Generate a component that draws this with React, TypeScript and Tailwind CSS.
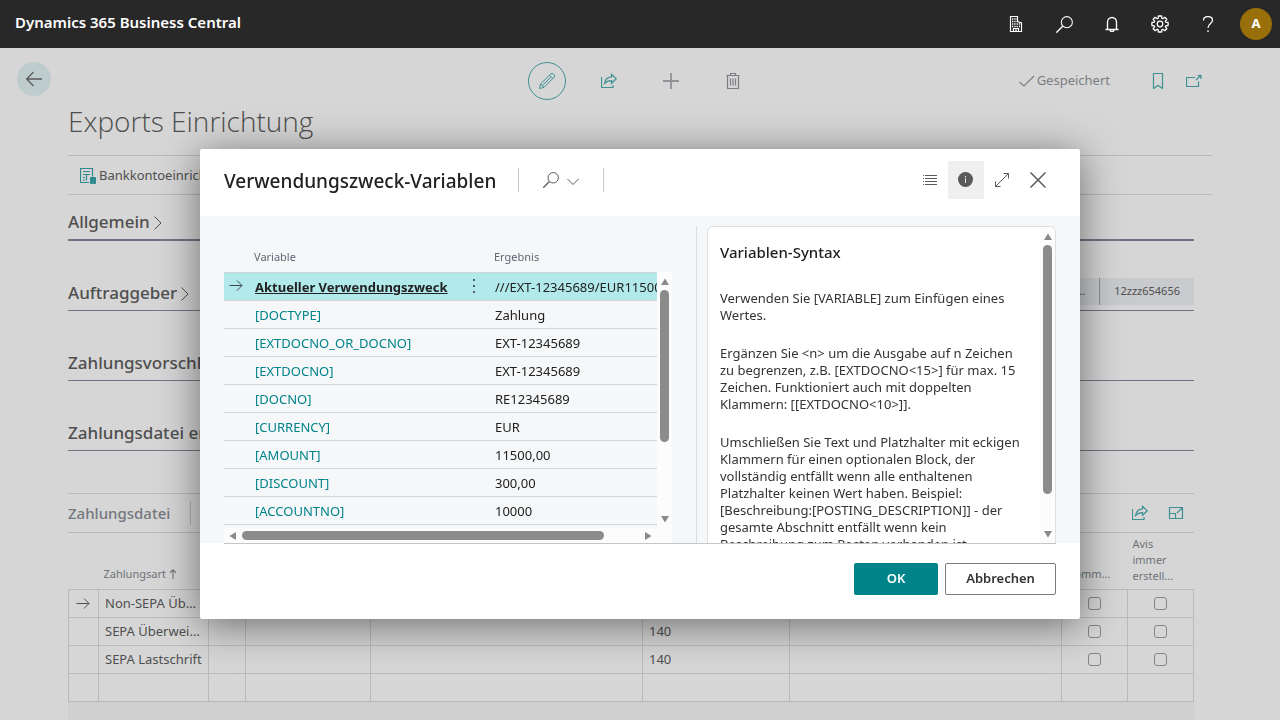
import React, { useState } from "react";
import clsx from "clsx";

type Variable = { name: string; result: string };

const variables: Variable[] = [
  { name: "Aktueller Verwendungszweck", result: "///EXT-12345689/EUR11500,00" },
  { name: "[DOCTYPE]", result: "Zahlung" },
  { name: "[EXTDOCNO_OR_DOCNO]", result: "EXT-12345689" },
  { name: "[EXTDOCNO]", result: "EXT-12345689" },
  { name: "[DOCNO]", result: "RE12345689" },
  { name: "[CURRENCY]", result: "EUR" },
  { name: "[AMOUNT]", result: "11500,00" },
  { name: "[DISCOUNT]", result: "300,00" },
  { name: "[ACCOUNTNO]", result: "10000" },
];

const payments = [
  { type: "Non-SEPA Überweisung", code: "" },
  { type: "SEPA Überweisung", code: "140" },
  { type: "SEPA Lastschrift", code: "140" },
];

type IconProps = { className?: string; children: React.ReactNode; box?: number };

function Icon({ className, children, box = 16 }: IconProps) {
  return (
    <svg
      viewBox={`0 0 ${box} ${box}`}
      className={clsx("shrink-0", className)}
      fill="none"
      stroke="currentColor"
      strokeWidth="1"
      aria-hidden="true"
    >
      {children}
    </svg>
  );
}

const SearchIcon = ({ className }: { className?: string }) => (
  <Icon className={className}>
    <circle cx="10.2" cy="5.8" r="5.2" />
    <path d="M6.500 9.500 0.300 15.700" strokeWidth="1.300" />
  </Icon>
);

const ShareIcon = () => (
  <Icon className="size-4">
    <path d="M0.500 4v10.500h11.500v-2.500" strokeWidth="1.200" />
    <path d="M10.500 1.300v2.600C6 4.300 4 7 3.500 10.500c1.900-2.100 3.900-2.900 7-2.900v2.700l4.800-4.500z" strokeWidth="1.200" />
  </Icon>
);

const ArrowRight = ({ className }: { className?: string }) => (
  <Icon className={className}>
    <path d="M1.500 7.500h12.500M9 2.500l5 5-5 5" />
  </Icon>
);

function Triangle({ dir }: { dir: "up" | "down" | "left" | "right" }) {
  const d = {
    up: "M4 0.500 8 7H0z",
    down: "M0 1h8L4 7.500z",
    left: "M7 0v8L0.500 4z",
    right: "M1 0 7.500 4 1 8z",
  }[dir];
  return (
    <svg viewBox="0 0 8 8" className="size-2 shrink-0 text-[#8a8a8a]" fill="currentColor" aria-hidden="true">
      <path d={d} />
    </svg>
  );
}

function VScroll({ thumb }: { thumb: string }) {
  return (
    <div className="flex w-[15px] shrink-0 flex-col items-center gap-1 bg-[#fcfcfc] pt-1.5 pb-[5px]">
      <Triangle dir="up" />
      <div className="flex-1">
        <div className={clsx("w-[9px] rounded-full bg-[#8b8b8b]", thumb)} />
      </div>
      <Triangle dir="down" />
    </div>
  );
}

function Section({ title, first, children }: { title: string; first?: boolean; children?: React.ReactNode }) {
  return (
    <section
      className={clsx(
        "flex items-center justify-between border-[#6f7482]",
        first ? "h-[46px] border-b-2" : "h-[70px] border-b pt-[34px]"
      )}
    >
      <h2 className={clsx("text-[17px] font-medium", first && "pt-2.5")}>
        <button className="flex items-center gap-[3px] whitespace-nowrap">
          {title}
          <svg
            viewBox="0 0 10 16"
            className="mt-0.5 h-4 w-2.5"
            fill="none"
            stroke="currentColor"
            aria-hidden="true"
          >
            <path d="M1.500 1.500 8 8l-6.500 6.500" />
          </svg>
        </button>
      </h2>
      {children}
    </section>
  );
}

function TopBar() {
  return (
    <header className="flex h-12 items-center justify-between bg-[#282828] pr-2 pl-[15px] text-white">
      <h1 className="pb-1 text-[15px] font-semibold">Dynamics 365 Business Central</h1>
      <div className="flex items-center">
        <button className="grid w-12 place-items-center" aria-label="Umgebung">
          <Icon className="size-4">
            <path d="M2.500 15.500V0.500h7v5l4 1.500v8.500zM5.500 15.500v-3h5v3M8 12.500v3" strokeWidth="1.200" />
            <path d="M4 3h5M4 5.500h5M4 8h8M4 10.500h8" strokeWidth="1.300" strokeDasharray="1.300 1" />
          </Icon>
        </button>
        <button className="grid w-12 place-items-center" aria-label="Suchen">
          <SearchIcon className="size-[17px]" />
        </button>
        <button className="grid w-12 place-items-center" aria-label="Benachrichtigungen">
          <Icon className="size-4">
            <path
              d="M1.500 13.500h13M3.500 13.500V6a4.500 4.500 0 0 1 9 0v7.500M6 14a2 1.500 0 0 0 4 0"
              strokeWidth="1.300"
            />
          </Icon>
        </button>
        <button className="grid w-12 place-items-center" aria-label="Einstellungen">
          <Icon className="size-[18px]" box={18}>
            <circle cx="9" cy="9" r="2.800" strokeWidth="1.300" />
            <path
              strokeLinejoin="round"
              strokeWidth="1.300"
              d="M7.400 1h3.200l.3 2.300 1 .4 1.900-1.400 2 2-1.400 1.900.4 1 2.300.3v3l-2.300.3-.4 1 1.400 1.900-2 2-1.900-1.400-1 .4-.3 2.300H7.400l-.3-2.300-1-.4-1.900 1.400-2-2 1.400-1.900-.4-1-2.300-.3v-3l2.300-.3.4-1-1.400-1.900 2-2 1.900 1.400 1-.4z"
            />
          </Icon>
        </button>
        <button className="grid w-12 place-items-center" aria-label="Hilfe">
          <Icon className="size-4">
            <path
              d="M3.500 4.500C3.500 2 5.500 0.600 8 0.600S12.500 2 12.500 4.300C12.500 7.500 8 7.500 8 12M8 14.300v1.700"
              strokeWidth="1.300"
            />
          </Icon>
        </button>
        <button className="ml-2 grid size-8 place-items-center rounded-full bg-[#986f0b] text-[13px] font-bold">
          A
        </button>
      </div>
    </header>
  );
}

function PageToolbar() {
  return (
    <div className="flex h-[38px] items-start">
      <div className="w-[68px] shrink-0 pl-[17px]">
        <button className="grid size-[34px] place-items-center rounded-full bg-[#bfcccd] text-[#5a5a5a]" aria-label="Zurück">
          <Icon className="size-4">
            <path d="M16 8H1M7.500 1 0.700 8l6.800 7" strokeWidth="1.300" />
          </Icon>
        </button>
      </div>
      <div className="grid flex-1 grid-cols-[1fr_auto_1fr] items-center pr-[68px] text-[#3f9093]">
        <span />
        <div className="flex gap-6">
          <button className="grid size-[38px] place-items-center rounded-full border border-[#3f9093]" aria-label="Bearbeiten">
            <Icon className="size-4">
              <path d="M0.500 15.500 1.600 11 11.800 0.900a1.700 1.700 0 0 1 2.400 0l.9.900a1.700 1.700 0 0 1 0 2.400L5 14.400zM1.600 11 5 14.400M10.500 2.200l3.300 3.300M3.200 12.800l8.500-8.500" />
            </Icon>
          </button>
          <button className="grid size-[38px] place-items-center" aria-label="Teilen">
            <ShareIcon />
          </button>
          <button className="grid size-[38px] place-items-center text-[#8f9297]" aria-label="Neu">
            <Icon className="size-4">
              <path d="M0 8h16M8 0v16" strokeWidth="1.800" />
            </Icon>
          </button>
          <button className="grid size-[38px] place-items-center text-[#7b7e84]" aria-label="Löschen">
            <Icon className="size-4">
              <path
                d="M1.500 2.500h13M5.500 2.500v-2h5v2M2.500 2.500v13h11v-13M5.500 5.500v7M8 5.500v7M10.500 5.500v7"
                strokeWidth="1.200"
              />
            </Icon>
          </button>
        </div>
        <div className="flex items-center justify-end pr-2.5">
          <span className="flex items-center gap-0.5 text-[13px] text-[#7a7d83]">
            <Icon className="size-4">
              <path d="M0.500 9 5 13 15 3" strokeWidth="1.200" />
            </Icon>
            Gespeichert
          </span>
          <button className="ml-10 grid place-items-center" aria-label="Lesezeichen">
            <Icon className="size-4">
              <path d="M3.500 0.500h9v15L8 12.500l-4.500 3z" strokeWidth="1.200" />
            </Icon>
          </button>
          <button className="ml-5 grid place-items-center" aria-label="In neuem Fenster öffnen">
            <Icon className="size-4">
              <path d="M9 4.500H0.500v9h12V8.500M10 7l5-5M11.500 2.500h3.500V6" strokeWidth="1.200" />
            </Icon>
          </button>
        </div>
      </div>
    </div>
  );
}

const cell = "h-7 border border-[#b9babc] px-1.5 pt-px";

function PaymentTable() {
  return (
    <table className="w-full table-fixed border-collapse text-left text-[13px] text-[#4f4f4f]">
      <colgroup>
        <col className="w-[30px]" />
        <col className="w-[110px]" />
        <col className="w-[37px]" />
        <col className="w-[125px]" />
        <col />
        <col className="w-[147px]" />
        <col />
        <col className="w-[66px]" />
        <col className="w-[66px]" />
      </colgroup>
      <thead>
        <tr className="h-14 align-bottom text-[11px] leading-4 text-[#6f7278]">
          <td />
          <th className="px-[5px] pb-[7px] font-normal whitespace-nowrap">
            <span className="flex items-center gap-0.5">
              Zahlungsart
              <Icon className="size-2.5" box={12}>
                <path d="M6 12V1M2.500 4.500 6 1l3.500 3.500" strokeWidth="1.300" />
              </Icon>
            </span>
          </th>
          <td colSpan={5} />
          <th className="px-1.5 pb-[7px] font-normal">Komm...</th>
          <th className="px-[5px] pb-[5px] font-normal">Avis immer erstell...</th>
        </tr>
      </thead>
      <tbody>
        {payments.map((p, i) => (
          <tr key={p.type}>
            <td className={cell}>{i === 0 && <ArrowRight className="size-4" />}</td>
            <td className={clsx(cell, "truncate")}>{p.type}</td>
            <td className={cell} />
            <td className={cell} />
            <td className={cell} />
            <td className={cell}>{p.code}</td>
            <td className={cell} />
            {["Kommentar", "Avis immer erstellen"].map((label) => (
              <td key={label} className={cell}>
                <input
                  type="checkbox"
                  aria-label={`${label} ${p.type}`}
                  className="mx-auto block size-[13px] appearance-none rounded-[3px] border border-[#858585]"
                />
              </td>
            ))}
          </tr>
        ))}
        <tr>
          {Array.from({ length: 9 }, (_, i) => (
            <td key={i} className={cell} />
          ))}
        </tr>
      </tbody>
    </table>
  );
}

function VariableList() {
  const [active, setActive] = useState(0);

  return (
    <div className="flex w-[448px] shrink-0 flex-col">
      <div className="flex flex-1 items-end overflow-hidden">
        <div className="min-w-0 flex-1 self-start overflow-hidden">
          <table className="w-full table-fixed border-collapse text-left text-[13px]">
            <colgroup>
              <col className="w-[25px]" />
              <col className="w-[210px]" />
              <col className="w-[29px]" />
              <col />
            </colgroup>
            <thead>
              <tr className="h-14 align-bottom text-[11px] leading-4 text-[#5f6673]">
                <td />
                <th className="px-[5px] pb-[7px] font-normal">Variable</th>
                <td />
                <th className="px-1.5 pb-[7px] font-normal">Ergebnis</th>
              </tr>
            </thead>
            <tbody className="text-[#212121]">
              {variables.map((v, i) => (
                <tr
                  key={v.name}
                  onClick={() => setActive(i)}
                  className={clsx("h-7 border-y border-[#d2d4dc]", i === active && "bg-[#b2eaec]")}
                >
                  <td className="pl-1">{i === active && <ArrowRight className="size-4 text-[#3f4650]" />}</td>
                  <td className="px-1.5 pt-[3px] whitespace-nowrap">
                    <a href="#" className={i === 0 ? "font-bold underline" : "text-[#00848a]"}>
                      {v.name}
                    </a>
                  </td>
                  <td>
                    {i === active && (
                      <button className="mx-auto block" aria-label="Weitere Optionen">
                        <svg viewBox="0 0 2 14" className="h-3.5 w-0.5" fill="#505c6d" aria-hidden="true">
                          <path d="M0 0h2v2H0zM0 6h2v2H0zM0 12h2v2H0z" />
                        </svg>
                      </button>
                    )}
                  </td>
                  <td className="overflow-hidden px-[7px] pt-[3px] whitespace-nowrap">{v.result}</td>
                </tr>
              ))}
            </tbody>
          </table>
        </div>
        <div className="flex h-full pt-14">
          <VScroll thumb="h-[152px]" />
        </div>
      </div>
      <div className="flex h-[15px] items-center gap-[5px] bg-[#fcfcfc] pr-5 pl-[5px]">
        <Triangle dir="left" />
        <div className="flex-1">
          <div className="h-[9px] w-[362px] rounded-full bg-[#8b8b8b]" />
        </div>
        <Triangle dir="right" />
      </div>
    </div>
  );
}

function SyntaxPanel() {
  return (
    <aside className="flex min-w-0 flex-1 overflow-hidden rounded-t-md border border-b-0 border-[#dcdfe3] bg-white">
      <div className="flex-1 overflow-hidden pt-[15px] pl-3 text-[13px] leading-[17px] text-[#333]">
        <h3 className="text-[15px] leading-5 font-medium text-[#212121]">Variablen-Syntax</h3>
        <p className="mt-7">
          Verwenden Sie [VARIABLE] zum Einfügen eines
          <br />
          Wertes.
        </p>
        <p className="mt-[21px] whitespace-nowrap">
          Ergänzen Sie &lt;n&gt; um die Ausgabe auf n Zeichen
          <br />
          zu begrenzen, z.B. [EXTDOCNO&lt;15&gt;] für max. 15
          <br />
          Zeichen. Funktioniert auch mit doppelten
          <br />
          Klammern: [[EXTDOCNO&lt;10&gt;]].
        </p>
        <p className="mt-[21px] whitespace-nowrap">
          Umschließen Sie Text und Platzhalter mit eckigen
          <br />
          Klammern für einen optionalen Block, der
          <br />
          vollständig entfällt wenn alle enthaltenen
          <br />
          Platzhalter keinen Wert haben. Beispiel:
          <br />
          [Beschreibung:[POSTING_DESCRIPTION]] - der
          <br />
          gesamte Abschnitt entfällt wenn kein
          <br />
          Beschreibung zum Posten vorhanden ist.
        </p>
      </div>
      <VScroll thumb="h-[249px]" />
    </aside>
  );
}

function VariablesDialog() {
  return (
    <div
      role="dialog"
      aria-labelledby="dialog-title"
      className="w-[880px] max-w-full overflow-hidden rounded-[2px] bg-white shadow-[0_6px_40px_0_rgba(0,0,0,0.5)]"
    >
      <div className="flex h-[67px] items-center px-6 pb-[5px] text-[#5a5a5a]">
        <h2 id="dialog-title" className="pt-0.5 text-[19px] font-medium text-[#212121]">
          Verwendungszweck-Variablen
        </h2>
        <div className="ml-[22px] flex h-6 items-center gap-2 border-x border-[#c9c9c9] px-6">
          <button aria-label="Suchen">
            <SearchIcon className="size-4" />
          </button>
          <button aria-label="Suchoptionen">
            <Icon className="mt-1 size-3" box={12}>
              <path d="M0.500 3 6 8.500 11.500 3" />
            </Icon>
          </button>
        </div>
        <div className="ml-auto flex">
          <button className="grid h-[38px] w-9 place-items-center" aria-label="Liste">
            <Icon className="size-4">
              <path d="M1 3.500h1M3 3.500h12M1 6.500h1M3 6.500h12M1 9.500h1M3 9.500h12M1 12.500h1M3 12.500h12" />
            </Icon>
          </button>
          <button className="grid h-[38px] w-9 place-items-center rounded-[2px] bg-[#efefef]" aria-label="Info">
            <svg viewBox="0 0 16 16" className="size-4" aria-hidden="true">
              <circle cx="7.500" cy="7.500" r="7.500" fill="#5a5a5a" />
              <path d="M7.500 4v1.500M7.500 6.500v4.500" stroke="#efefef" strokeWidth="1" />
            </svg>
          </button>
          <button className="grid h-[38px] w-9 place-items-center" aria-label="Maximieren">
            <Icon className="size-4">
              <path d="M1.500 14.500l13-13M9.500 1.500h5v5M1.500 9.500v5h5" />
            </Icon>
          </button>
          <button className="grid h-[38px] w-9 place-items-center" aria-label="Schließen">
            <Icon className="size-4">
              <path d="M0.500 0.500l15 15M15.500 0.500l-15 15" strokeWidth="1.500" />
            </Icon>
          </button>
        </div>
      </div>
      <div className="flex h-[327px] bg-[#f5f7f9] px-6">
        <VariableList />
        <div className="mt-[10px] ml-6 flex min-w-0 flex-1 gap-2.5">
          <div className="w-px bg-[#d9dce0]" />
          <SyntaxPanel />
        </div>
      </div>
      <div className="mx-6 flex h-[76px] items-start justify-end gap-[7px] border-t border-[#c6c6c6] pt-[19px] text-[13px] font-semibold">
        <button className="h-8 w-[84px] rounded-[2px] bg-[#00848a] text-white">OK</button>
        <button className="h-8 w-[111px] rounded-[2px] border border-[#7c7c7c] text-[#333]">Abbrechen</button>
      </div>
    </div>
  );
}

export default function App() {
  return (
    <div className="h-screen overflow-hidden bg-[#d6d6d6] font-['Noto_Sans',sans-serif] text-[#4f4f4f]">
      <TopBar />
      <main className="pt-[14px]">
        <PageToolbar />
        <div className="px-[68px]">
          <h1 className="pb-3 font-['Open_Sans',sans-serif] text-[28px] leading-[43px] font-light">
            Exports Einrichtung
          </h1>
          <div className="flex h-10 items-center border-y border-[#b9b9b9] px-3">
            <button className="flex items-center gap-[3px] pt-0.5 text-[13px]">
              <Icon className="size-4 text-[#2c8a8e]">
                <path d="M9 14.500H0.500v-14h12v8M3 3.500h7M3 6.500h7M3 9.500h2M3 12h2M6.500 6.500v6" strokeWidth="1.200" />
                <path d="M10.500 9.500h5v6h-2v-2h-1v2h-2z" fill="currentColor" />
              </Icon>
              Bankkontoeinrichtung
            </button>
          </div>
          <div className="mr-[18px]">
            <Section title="Allgemein" first />
            <Section title="Auftraggeber">
              <div className="mb-0.5 flex h-[27px] items-center bg-[#c8cacd] text-[11px]">
                <span className="w-20 pr-3.5 text-right">A...</span>
                <span className="flex h-full items-center border-l border-[#8f9092] px-3.5">12zzz654656</span>
              </div>
            </Section>
            <Section title="Zahlungsvorschlag" />
            <Section title="Zahlungsdatei erstellen" />
            <div className="mt-[42px] flex h-10 items-center border-y border-[#b9b9b9]">
              <h2 className="text-[15px] font-medium text-[#74777d]">Zahlungsdatei</h2>
              <div className="ml-5 h-6 w-px bg-[#b0b0b0]" />
              <div className="ml-auto flex gap-5 pr-2.5 text-[#3f9093]">
                <button aria-label="Teilen">
                  <ShareIcon />
                </button>
                <button aria-label="Erweitern">
                  <Icon className="size-4">
                    <path d="M1.500 2.500h13v11h-13zM1.500 8.500h6v5M9 8l5-5M10.500 2.500h4v4" strokeWidth="1.200" />
                  </Icon>
                </button>
              </div>
            </div>
            <PaymentTable />
            <div className="h-10 bg-[#d0d0d0]" />
          </div>
        </div>
      </main>
      <div className="fixed inset-x-0 top-12 bottom-0 flex items-center justify-center">
        <VariablesDialog />
      </div>
    </div>
  );
}
